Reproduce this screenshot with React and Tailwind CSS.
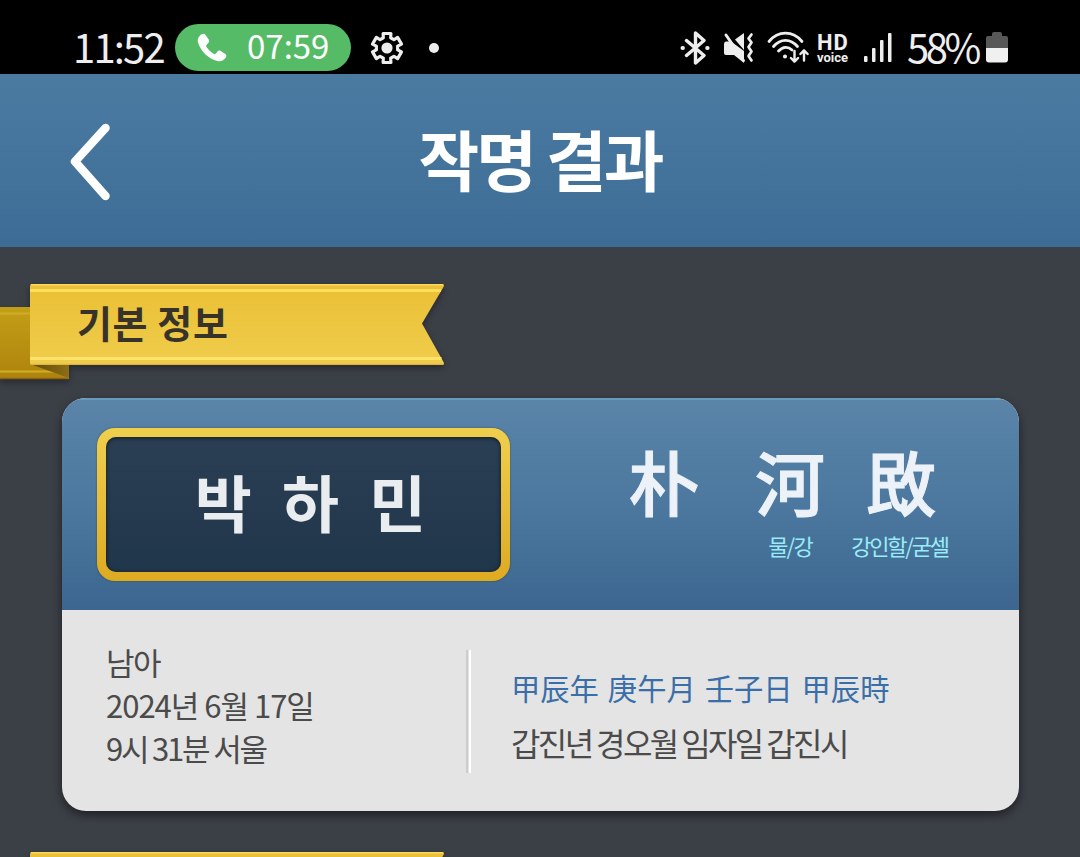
const gearPoints = [-90, -30, 30, 90, 150, 210]
  .flatMap((a) => [
    [10.8, a - 20],
    [15, a - 15],
    [15, a + 15],
    [10.8, a + 20],
  ])
  .map(([r, a]) => {
    const rad = (a * Math.PI) / 180;
    return `${(18 + r * Math.cos(rad)).toFixed(2)},${(18 + r * Math.sin(rad)).toFixed(2)}`;
  })
  .join(" ");

const PhoneIcon = () => (
  <svg width="30" height="30" viewBox="0 0 30 30" fill="#fff">
    <path d="M4.6 1.3C6 .4 7.600 .6 8.500 1.900L11.700 6.600C12.500 7.900 12.300 8.900 11.300 10L9.500 12C8.900 12.700 9 13.200 9.500 14C11.500 17 14 19.200 17 20.900C17.700 21.300 18.200 21.200 18.800 20.500L20.500 18.600C21.400 17.500 22.500 17.300 23.700 18L28.300 21.100C29.600 22 29.700 23.400 28.800 24.600C26.800 27.300 24.200 29 20.500 28.100C11.200 25.500 4.300 18.900 1.200 10C0 6.200 1.600 3.400 4.600 1.300Z" />
  </svg>
);

const GearIcon = () => (
  <svg width="36" height="36" viewBox="0 0 36 36">
    <polygon points={gearPoints} fill="none" stroke="#eee" strokeWidth="3.2" strokeLinejoin="round" />
    <circle cx="18" cy="18" r="5.600" fill="#eee" />
  </svg>
);

const BluetoothIcon = () => (
  <svg width="30" height="34" viewBox="0 0 30 34" fill="none" stroke="#eee" strokeWidth="3.4" strokeLinecap="round" strokeLinejoin="round">
    <path d="M6.500 9.500L24 24.500L15.500 32V2L24 9.500L6.500 24.500" />
    <path d="M2.500 17h.4M27.200 17h.4" strokeWidth="4" />
  </svg>
);

const MuteIcon = () => (
  <svg width="31" height="34" viewBox="0 0 31 34">
    <path d="M1 13Q1 10.500 3 10.500H8L21 20V32L11 24H3Q1 24 1 22Z" fill="#eee" />
    <path d="M12 8.500L21 2V19Z" fill="#eee" />
    <path d="M3 4L20.500 29.500" stroke="#eee" strokeWidth="3" strokeLinecap="round" />
    <path d="M28.500 3.500L25.500 7.500L28.500 11.500L25.500 16L28.500 20.500L25.500 25L28.500 29.500" fill="none" stroke="#eee" strokeWidth="2.700" strokeLinecap="round" strokeLinejoin="round" />
  </svg>
);

const WifiIcon = () => (
  <svg width="42" height="34" viewBox="0 0 42 34" fill="none" stroke="#eee" strokeWidth="2.800" strokeLinecap="round" strokeLinejoin="round">
    <path d="M2 10.500C11-.6 26-.6 35 10.500" />
    <path d="M6.500 15.500C13.500 7.300 23.500 7.300 30.500 15.500" />
    <path d="M11.500 20C15.800 15.300 21.200 15.300 25 19" />
    <circle cx="18" cy="25.500" r="1.300" fill="#eee" strokeWidth="1.500" />
    <path d="M27.500 20V30.500M23.900 27L27.500 30.700L31.100 27" strokeWidth="2.400" />
    <path d="M37 29.500V19.500M33.400 23L37 19.300L40.600 23" strokeWidth="2.400" />
  </svg>
);

const SignalIcon = () => (
  <svg width="29" height="30" viewBox="0 0 29 30" fill="#eee">
    <rect x="1" y="23" width="3.500" height="6" rx="1" />
    <rect x="9" y="15" width="3.500" height="14" rx="1" />
    <rect x="17" y="7" width="3.500" height="22" rx="1" />
    <rect x="25" y="0" width="3.500" height="29" rx="1" />
  </svg>
);

const BatteryIcon = () => (
  <svg width="22" height="31" viewBox="0 0 22 31">
    <path d="M6 4V2Q6 0 8 0H14Q16 0 16 2V4H20Q22 4 22 6V16H0V6Q0 4 2 4Z" fill="#585858" />
    <path d="M0 16H22V27.500Q22 30.500 19 30.500H3Q0 30.500 0 27.500Z" fill="#f0f0f0" />
  </svg>
);

const RibbonShape = () => (
  <svg className="absolute left-0 top-0 drop-shadow-[0_3px_3px_rgba(0,0,0,0.35)]" width="450" height="100" viewBox="0 0 450 100">
    <defs>
      <linearGradient id="ribbonFront" x1="0" y1="0" x2="0" y2="1">
        <stop offset="0" stopColor="#eabf35" />
        <stop offset="1" stopColor="#f0cd4c" />
      </linearGradient>
      <linearGradient id="ribbonBack" x1="0" y1="0" x2="0" y2="1">
        <stop offset="0" stopColor="#c39f18" />
        <stop offset="1" stopColor="#ae830c" />
      </linearGradient>
      <linearGradient id="ribbonFold" x1="0" y1="0" x2="1" y2="0">
        <stop offset="0" stopColor="#5f4a0e" />
        <stop offset="1" stopColor="#8c6e14" />
      </linearGradient>
    </defs>
    <path d="M0 24H69V96H0Z" fill="url(#ribbonBack)" />
    <path d="M0 30.500H30M0 88.500H60" stroke="#cfae24" strokeWidth="2" />
    <path d="M0 95.500H68" stroke="#8c6210" strokeWidth="1.500" />
    <path d="M30 81H69V95Z" fill="url(#ribbonFold)" />
    <path d="M32 1H442Q445 1 443.500 4L422 40.500L443.500 79Q445 82 442 82H32Q30 82 30 80V3Q30 1 32 1Z" fill="url(#ribbonFront)" />
    <path d="M31 1.800H443" stroke="#f7d95e" strokeWidth="1.500" />
    <path d="M30 7.500H441" stroke="#ffdf5a" strokeWidth="3" />
    <path d="M30 75.500H441.500" stroke="#fde26c" strokeWidth="3" />
    <path d="M31 81.300H443" stroke="#dcb840" strokeWidth="1.200" />
  </svg>
);

const Ribbon = ({ children }) => (
  <div className="relative h-[115px] w-[450px] shrink-0">
    <RibbonShape />
    <h2 className="relative pl-[77px] text-[38px] leading-[78px] font-bold tracking-[0.6px] text-[#38332a]">{children}</h2>
  </div>
);

const hanja = [
  { char: "朴", meaning: "", width: "w-[126px]", tracking: "" },
  { char: "河", meaning: "물/강", width: "w-[126px]", tracking: "tracking-[-1.8px]" },
  { char: "敃", meaning: "강인할/굳셀", width: "w-[96px]", tracking: "-ml-[3px] tracking-[-2.2px]" },
];

const StatusBar = () => (
  <div className="flex h-[74px] shrink-0 items-center bg-black pt-[21px] pr-[72px] pl-[73px] text-[#eee]">
    <span className="-mt-[4px] w-[102px] text-[40px] leading-[46px] tracking-[-1.8px]">11:52</span>
    <div className="flex h-[47px] w-[176px] items-center rounded-full bg-[#56bb66] pl-[22px] text-white">
      <PhoneIcon />
      <span className="-mt-[5px] ml-5 text-[33px] leading-[44px]">07:59</span>
    </div>
    <div className="ml-[18px]">
      <GearIcon />
    </div>
    <div className="ml-6 size-[10px] rounded-full bg-[#eee]" />
    <div className="ml-auto flex items-center">
      <BluetoothIcon />
      <div className="ml-[13px]">
        <MuteIcon />
      </div>
      <div className="ml-[13px]">
        <WifiIcon />
      </div>
      <div className="ml-[8px] w-[34px] pt-[4px] font-['Roboto'] font-bold">
        <div className="h-[17px] text-[22px] leading-[17px] tracking-[1px]">HD</div>
        <div className="h-[14px] text-[13px] leading-[14px]">voice</div>
      </div>
      <div className="ml-[12px]">
        <SignalIcon />
      </div>
      <span className="-mt-[4px] ml-[15px] w-[79px] text-[40px] leading-[46px] tracking-[-3.400px]">58%</span>
      <BatteryIcon />
    </div>
  </div>
);

export default function App() {
  return (
    <div className="flex h-[857px] w-[1080px] flex-col overflow-hidden bg-[#3b3f46] font-['Noto_Sans_CJK_KR','Noto_Sans_CJK_JP',sans-serif]">
      <StatusBar />

      <header className="grid h-[173px] shrink-0 grid-cols-[1fr_auto_1fr] items-center bg-linear-to-b from-[#4b7aa1] to-[#3d6c96]">
        <svg className="ml-[68px]" width="44" height="80" viewBox="0 0 44 80" fill="none" stroke="#fff" strokeWidth="8.500" strokeLinecap="round" strokeLinejoin="round">
          <path d="M37.500 7L7 40.500L37.500 75" />
        </svg>
        <h1 className="pb-[7px] text-[66px] leading-none font-bold tracking-[-3px] text-white">작명 결과</h1>
      </header>

      <main className="pt-9">
        <Ribbon>기본 정보</Ribbon>

        <section className="ml-[62px] h-[413px] w-[957px] overflow-hidden rounded-[24px] bg-[#e4e4e4] shadow-[0_4px_8px_rgba(0,0,0,0.5)]">
          <div className="flex h-[212px] border-t-2 border-[#669bbd] bg-linear-to-b from-[#5a84a8] via-[#4c789f] to-[#3c668f] pt-[28px] pl-[35px]">
            <div className="h-[153px] w-[413px] rounded-[18px] bg-linear-to-b from-[#efcf4d] to-[#deaa20] p-[9px] shadow-[0_0_2px_rgba(60,60,20,0.7)]">
              <div className="flex h-full items-center justify-center rounded-[10px] bg-linear-to-b from-[#2b3f54] to-[#20364a] pb-[7px] pl-[22px] text-[62px] leading-none font-bold tracking-[8px] text-[#e9edf0] shadow-[inset_0_1px_4px_rgba(0,0,0,0.6)]">
                박 하 민
              </div>
            </div>
            <div className="ml-[91px] flex pt-[17px] text-center">
              {hanja.map((item) => (
                <div key={item.char} className={item.width}>
                  <div className="text-[70px] leading-[72px] font-medium text-[#edf2f8] [-webkit-text-stroke:1px_#edf2f8]">{item.char}</div>
                  <div className={`mt-[13px] text-[22px] leading-[30px] whitespace-nowrap text-[#97ecf7] ${item.tracking}`}>{item.meaning}</div>
                </div>
              ))}
            </div>
          </div>

          <div className="flex h-[201px] pt-[40px] text-[#4b4b4b]">
            <div className="w-[404px] pl-[44px] text-[31px] leading-[43px]">
              <p className="-mt-[10px] tracking-[-1.5px]">남아</p>
              <p className="tracking-[-1px]">2024년 6월 17일</p>
              <p className="tracking-[-2.200px]">9시 31분 서울</p>
            </div>
            <div className="h-[123px] w-[5px] border-r-2 border-l-2 border-l-[#cdcdcd] border-r-white" />
            <div className="pt-[15px] pl-[40px]">
              <p className="text-[29.300px] leading-[44px] [word-spacing:2.400px] text-[#3a6ea8]">甲辰年 庚午月 壬子日 甲辰時</p>
              <p className="mt-[11px] text-[32px] leading-[44px] tracking-[-2.600px]">갑진년 경오월 임자일 갑진시</p>
            </div>
          </div>
        </section>

        <div className="mt-10">
          <Ribbon>{""}</Ribbon>
        </div>
      </main>
    </div>
  );
}
